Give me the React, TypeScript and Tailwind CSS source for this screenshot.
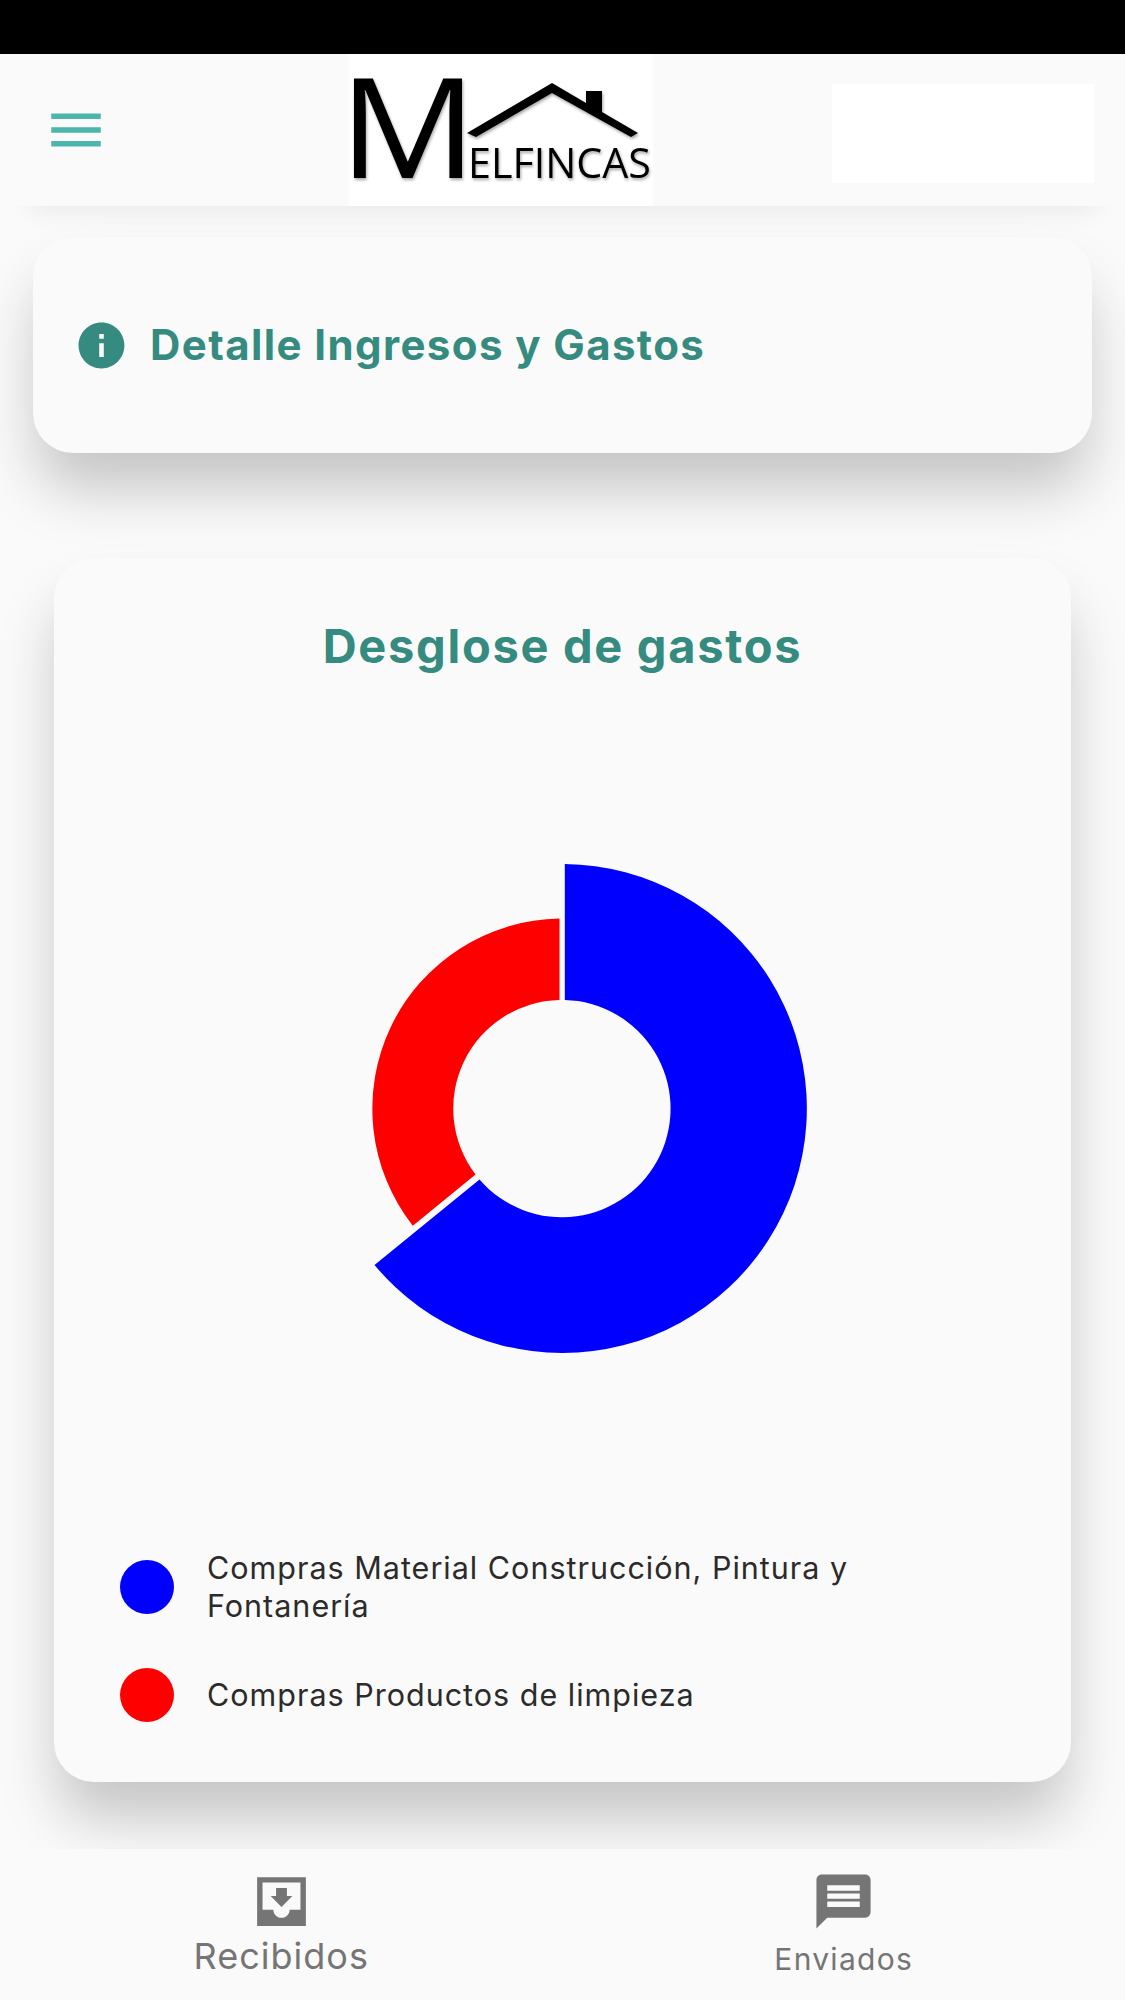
import React from 'react';
import { MdInfo, MdMenu, MdMessage } from 'react-icons/md';

const inter = { fontFamily: 'Inter, "Noto Sans", sans-serif' };

const Logo = () => (
  <svg viewBox="0 0 304 152" className="h-[152px] w-[304px] overflow-visible">
    <defs>
      <filter id="logoShadow" x="-10%" y="-10%" width="120%" height="120%">
        <feDropShadow dx="1" dy="2" stdDeviation="1.5" floodColor="#000" floodOpacity="0.35" />
      </filter>
    </defs>
    <g filter="url(#logoShadow)" fill="#000">
      <text x="-10" y="124" fontFamily="Open Sans" fontSize="140" fontWeight="500" textLength="138" lengthAdjust="spacingAndGlyphs">M</text>
      <text x="119" y="124" fontFamily="Open Sans" fontSize="42" fontWeight="500" textLength="183" lengthAdjust="spacingAndGlyphs">ELFINCAS</text>
      <path d="M118 79 L203 29 L237 49 L237 37 L253 37 L253 58 L289 79 L282 83 L203 39 L127 83 Z" />
    </g>
  </svg>
);

const InboxIcon = () => (
  <svg viewBox="0 0 24 24" className="h-[65px] w-[65px]" fill="currentColor">
    <path d="M21 3H3v18h18V3zm-2 12h-4c0 1.66-1.35 3-3 3s-3-1.34-3-3H5V5h14v10zm-3-5h-2V7h-4v3H8l4 4 4-4z" />
  </svg>
);

const LegendRow = ({ color, label }: { color: string; label: string }) => (
  <div className="flex items-center gap-[33px]">
    <div className={`h-[54px] w-[54px] shrink-0 rounded-full ${color}`} />
    <p className="w-[680px] text-[30.5px] leading-[38px] tracking-[1px] text-[#2b2b2b]">{label}</p>
  </div>
);

const Donut = () => (
  <svg viewBox="313.5 855 500 510" className="h-[510px] w-[500px]">
    <path
      fill="#0000ff"
      d="M565.3 864 A244.5 244.5 0 1 1 375 1265 L480 1179.5 A108.7 108.7 0 1 0 565.3 999.9 Z"
    />
    <path
      fill="#ff0000"
      d="M560 918.6 A190 190 0 0 0 413.3 1225.8 L476 1174.5 A108.7 108.7 0 0 1 560 999.9 Z"
    />
  </svg>
);

export default function App() {
  return (
    <div className="relative flex h-[2000px] w-[1125px] flex-col overflow-hidden bg-[#fafafa]" style={inter}>
      <div className="h-[54px] shrink-0 bg-black" />

      <header className="relative z-10 flex h-[152px] shrink-0 items-center bg-[#fafafa] pl-[43px] pr-[31px] shadow-[0_35px_25px_-30px_rgba(0,0,0,0.07)]">
        <MdMenu size={66} color="#4db6ac" className="shrink-0" />
        <div className="ml-[240px] bg-white">
          <Logo />
        </div>
        <div className="mt-[6px] ml-auto h-[99px] w-[262px] bg-white" />
      </header>

      <section className="mx-[33px] mt-[31px] flex h-[216px] shrink-0 items-center gap-[21px] rounded-[40px] bg-[#fafafa] pl-[41px] shadow-[0_40px_60px_-5px_rgba(0,0,0,0.22)]">
        <MdInfo size={55} color="#358b7f" className="shrink-0" />
        <h1 className="text-[42px] leading-none font-bold tracking-[1.4px] text-[#358b7f]">Detalle Ingresos y Gastos</h1>
      </section>

      <section className="mx-[54px] mt-[105px] flex h-[1224px] shrink-0 flex-col items-center rounded-[40px] bg-[#fafafa] pt-[61px] shadow-[0_40px_60px_-5px_rgba(0,0,0,0.22)]">
        <h2 className="text-[47px] leading-[54px] font-bold tracking-[1.7px] text-[#358b7f]">Desglose de gastos</h2>
        <div className="mt-[182px]">
          <Donut />
        </div>
        <div className="mt-[184px] flex w-full flex-col gap-[43px] pl-[66px]">
          <LegendRow color="bg-[#0000ff]" label="Compras Material Construcción, Pintura y Fontanería" />
          <LegendRow color="bg-[#ff0000]" label="Compras Productos de limpieza" />
        </div>
      </section>

      <nav className="absolute right-0 bottom-0 left-0 z-10 grid h-[151px] grid-cols-2 bg-[#fafafa] text-[#757575]">
        <div className="flex flex-col items-center pt-[20px]">
          <InboxIcon />
          <span className="text-[36px] leading-[44px] tracking-[1px]">Recibidos</span>
        </div>
        <div className="flex flex-col items-center pt-[20px]">
          <MdMessage size={65} />
          <span className="mt-[6px] text-[30px] leading-[38px] tracking-[1.3px]">Enviados</span>
        </div>
      </nav>
    </div>
  );
}
